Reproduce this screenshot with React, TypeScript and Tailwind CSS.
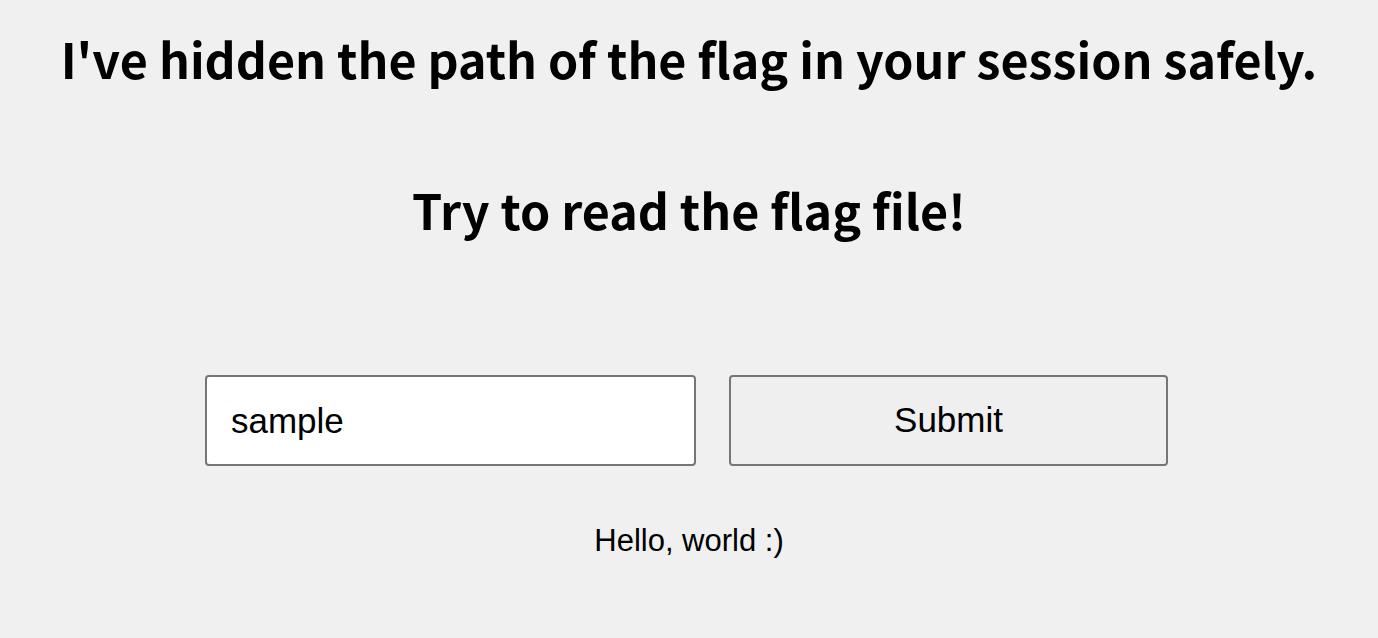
import React from "react";

export default function App() {
  return (
    <div className="min-h-[638px] w-full bg-[#f0f0f0] flex flex-col items-center text-black">
      <h1 className="mt-[28px] text-[48.4px] leading-[60px] font-bold [font-family:'Noto_Sans_CJK_KR','Noto_Sans',sans-serif] whitespace-nowrap">
        I've hidden the path of the flag in your session safely.
      </h1>
      <h2 className="mt-[91px] text-[48.4px] leading-[60px] font-bold [font-family:'Noto_Sans_CJK_KR','Noto_Sans',sans-serif] whitespace-nowrap">
        Try to read the flag file!
      </h2>
      <div className="mt-[136px] pr-[5px] flex gap-[33px] [font-family:'Liberation_Sans',Arial,sans-serif]">
        <input
          defaultValue="sample"
          className="w-[491px] h-[91px] bg-white border-2 border-[#767676] rounded-[4px] px-[24px] text-[35px] outline-none"
        />
        <button className="w-[439px] h-[91px] bg-[#efefef] border-2 border-[#767676] rounded-[4px] text-[35px]">
          Submit
        </button>
      </div>
      <p className="mt-[57px] text-[31px] leading-[36px] [font-family:'Liberation_Sans',Arial,sans-serif]">
        Hello, world :)
      </p>
    </div>
  );
}
